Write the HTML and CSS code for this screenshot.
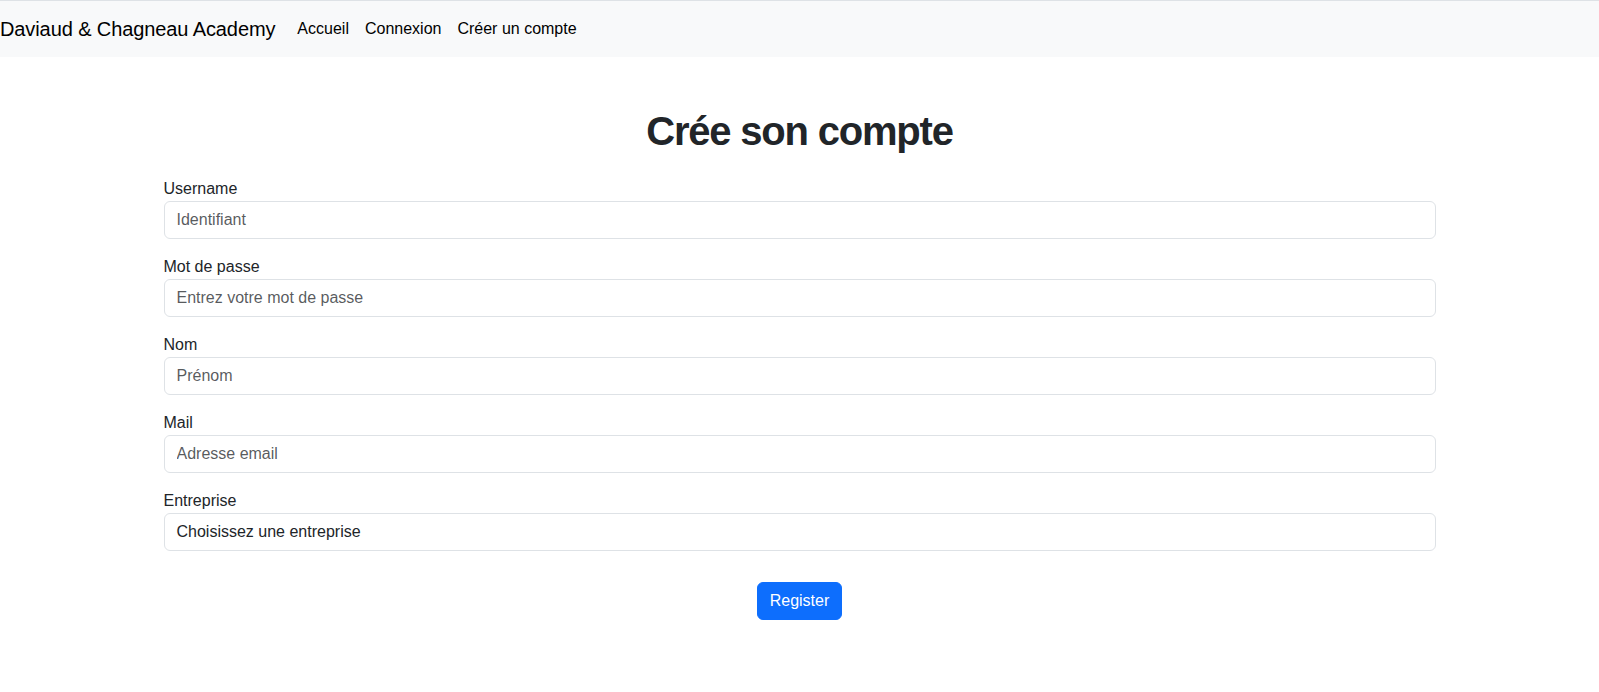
FILE: index.html
```html
<!DOCTYPE html>
<html lang="fr">
<head>
<meta charset="utf-8">
<title>Créer un compte</title>
<link rel="stylesheet" href="styles.css">
</head>
<body>
<nav class="navbar">
  <a class="brand" href="#">Daviaud &amp; Chagneau Academy</a>
  <ul class="nav-links">
    <li><a class="nav-link" href="#">Accueil</a></li>
    <li><a class="nav-link" href="#">Connexion</a></li>
    <li><a class="nav-link" href="#">Créer un compte</a></li>
  </ul>
</nav>
<main class="page">
  <h1 class="title">Crée son compte</h1>
  <form class="form">
    <div class="field">
      <label class="label" for="username">Username</label>
      <input class="control" id="username" type="text" placeholder="Identifiant">
    </div>
    <div class="field">
      <label class="label" for="password">Mot de passe</label>
      <input class="control" id="password" type="password" placeholder="Entrez votre mot de passe">
    </div>
    <div class="field">
      <label class="label" for="nom">Nom</label>
      <input class="control" id="nom" type="text" placeholder="Prénom">
    </div>
    <div class="field">
      <label class="label" for="mail">Mail</label>
      <input class="control" id="mail" type="email" placeholder="Adresse email">
    </div>
    <div class="field">
      <label class="label" for="entreprise">Entreprise</label>
      <div class="control select" id="entreprise">Choisissez une entreprise</div>
    </div>
    <div class="actions">
      <button class="btn" type="button">Register</button>
    </div>
  </form>
</main>
</body>
</html>
```

FILE: styles.css
```css
* { box-sizing: border-box; }

body {
  margin: 0;
  font-family: "Segoe UI", "Liberation Sans", Arial, sans-serif;
  font-size: 16px;
  line-height: 1.5;
  color: #212529;
  background: #fff;
}

.navbar {
  display: flex;
  align-items: center;
  border-top: 1px solid #dee2e6;
  background: #f8f9fa;
  padding: 8px 0;
}

.brand {
  font-size: 20px;
  line-height: 30px;
  padding: 5px 0;
  margin-right: 14px;
  color: #000;
  text-decoration: none;
  white-space: nowrap;
  letter-spacing: -0.1px;
}

.nav-links {
  display: flex;
  list-style: none;
  margin: 0;
  padding: 0;
}

.nav-link {
  display: block;
  padding: 8px;
  line-height: 24px;
  color: #000;
  text-decoration: none;
}

.page {
  max-width: 1272px;
  margin: 0 auto;
}

.title {
  font-size: 40px;
  font-weight: 700;
  letter-spacing: -1.2px;
  line-height: 48px;
  text-align: center;
  margin: 50px 0 22px;
}

.form {
  display: flex;
  flex-direction: column;
}

.field {
  margin-bottom: 16px;
}

.label {
  display: block;
  line-height: 24px;
}

.control {
  display: block;
  width: 100%;
  height: 38px;
  padding: 6px 12px;
  font: inherit;
  font-size: 16px;
  line-height: 24px;
  color: #212529;
  background: #fff;
  border: 1px solid #dee2e6;
  border-radius: 6px;
  outline: none;
}

.control::placeholder {
  color: rgba(33, 37, 41, 0.75);
}

.actions {
  text-align: center;
  padding-top: 15px;
}

.btn {
  font: inherit;
  font-size: 16px;
  line-height: 24px;
  padding: 6px 12px;
  color: #fff;
  background: #0d6efd;
  border: 1px solid #0d6efd;
  border-radius: 6px;
  cursor: pointer;
}
```
